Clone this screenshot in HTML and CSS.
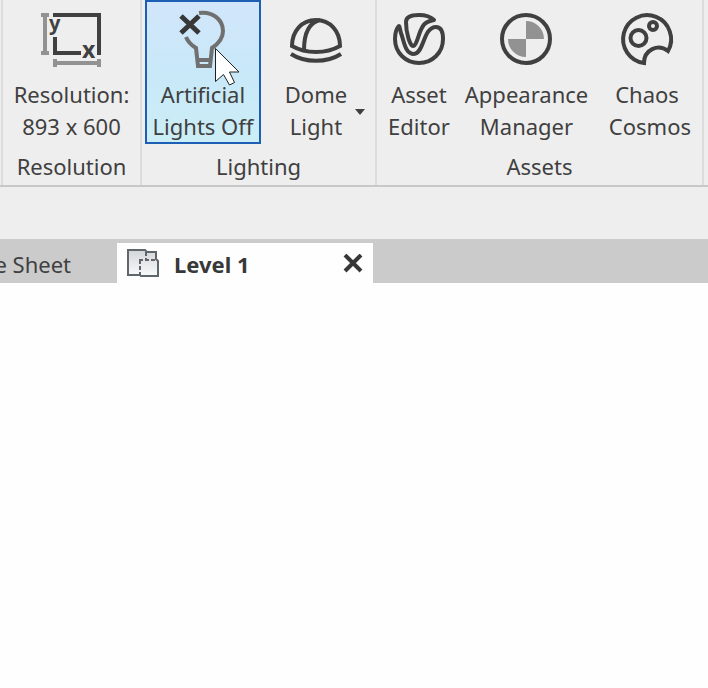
FILE: index.html
```html
<!DOCTYPE html>
<html lang="en">
<head>
    <meta charset="UTF-8">
    <meta name="viewport" content="width=device-width, initial-scale=1.0">
    <title>Level 1</title>
    <link rel="stylesheet" href="styles.css">
</head>
<body>
    <div class="ribbon">
        <!-- Resolution -->
        <section class="panel panel-resolution">
            <div class="tools">
                <button class="tool" type="button">
                    <svg class="icon icon-wide" viewBox="0 0 64 60" fill="none">
                        <path d="M6 5v42M2 7h8M2 45h8M16 55h44M16 51v8M60 51v8" stroke="#929292" stroke-width="4"/>
                        <path d="M14 7h46v40M16 29v16h26" stroke="#404040" stroke-width="4"/>
                        <text class="axis" x="10" y="22" font-size="20">y</text>
                        <text class="axis" x="43" y="50" font-size="23">x</text>
                    </svg>
                    <span class="tool-label">Resolution:<br>893 x 600</span>
                </button>
            </div>
            <div class="panel-title">Resolution</div>
        </section>

        <!-- Lighting -->
        <section class="panel panel-lighting">
            <div class="tools">
                <button class="tool selected" type="button">
                    <svg class="icon icon-wide" viewBox="0 0 64 60" fill="none">
                        <path d="M28 5c14-2 24 7 24 18 0 8-5 13-11 17l-2 18H27l-2-18c-5-3-8-6-10-11M27 52h13" stroke="#707070" stroke-width="4"/>
                        <path d="M10 8l18 17M28 8L10 25" stroke="#383838" stroke-width="5"/>
                    </svg>
                    <span class="tool-label">Artificial<br>Lights Off</span>
                    <svg class="cursor" viewBox="0 0 27 40">
                        <path d="M1.500 1.500v33l8-7 6 10.500 5-2.500-5-10.500H25z" fill="#fff" stroke="#202020" stroke-width="1"/>
                    </svg>
                </button>
                <button class="tool dome" type="button">
                    <svg class="icon icon-wide" viewBox="0 0 64 60" fill="none" stroke="#404040" stroke-width="4">
                        <path d="M8 38c0-15 10-26 24-26s24 11 24 26c-14 8-34 8-48 0zM36 12c-12 3-16 14-16 30"/>
                        <path d="M7 46c14 9 36 9 50 0"/>
                    </svg>
                    <span class="tool-label">Dome<br>Light</span>
                    <svg class="arrow" viewBox="0 0 10 6"><path d="M0 0h10L5 6z" fill="#404040"/></svg>
                </button>
            </div>
            <div class="panel-title">Lighting</div>
        </section>

        <!-- Assets -->
        <section class="panel panel-assets">
            <div class="tools">
                <button class="tool" type="button">
                    <svg class="icon" viewBox="0 0 60 60" fill="none" stroke="#404040" stroke-width="4" stroke-linejoin="round">
                        <path d="M10 18C7 21 6 26 6 31c0 14 11 24 24 24s24-10 24-24c0-8-2-12-7-12-13 0-12 27-22 27-9 0-10-13-13-21-1-3-1-6-2-7z"/>
                        <path d="M17 14c0-5 6-7 13-7 6 0 12 2 15 5-10 2-11 5-14 12-2 5-4 14-7 14s-7-13-7-24z"/>
                    </svg>
                    <span class="tool-label">Asset<br>Editor</span>
                </button>
                <button class="tool" type="button">
                    <svg class="icon" viewBox="0 0 60 60">
                        <path d="M30 31V13a18 18 0 0 1 18 18zM30 31v18a18 18 0 0 1-18-18z" fill="#929292"/>
                        <circle cx="30" cy="31" r="24" fill="none" stroke="#404040" stroke-width="4"/>
                    </svg>
                    <span class="tool-label">Appearance<br>Manager</span>
                </button>
                <button class="tool cosmos" type="button">
                    <svg class="icon" viewBox="0 0 60 60" fill="none" stroke="#404040" stroke-width="4">
                        <path d="M27 55A24 24 0 1 1 51 43c-10-8-24-1-24 12z"/>
                        <circle cx="21.500" cy="30" r="8"/>
                        <circle cx="36" cy="18" r="4"/>
                    </svg>
                    <span class="tool-label">Chaos&nbsp;<br>Cosmos</span>
                </button>
            </div>
            <div class="panel-title">Assets</div>
        </section>
    </div>

    <div class="options-bar"></div>

    <nav class="tabs">
        <button class="tab" type="button">e Sheet</button>
        <div class="tab active">
            <svg class="tab-icon" viewBox="0 0 32 30" fill="none">
                <defs>
                    <linearGradient id="page" x1="0" y1="0" x2="0" y2="1">
                        <stop offset="0" stop-color="#d3d6d9"/>
                        <stop offset="1" stop-color="#fafafa"/>
                    </linearGradient>
                </defs>
                <path d="M1 1h17l2 2h9v7l2 2v15H14l-1-1H1z" fill="url(#page)" stroke="#60676c" stroke-width="2"/>
                <path d="M19 3v8M12 11h18M13 11v15" stroke="#60676c" stroke-width="2" stroke-dasharray="4 2"/>
            </svg>
            <span class="tab-name">Level 1</span>
            <button class="close" type="button" aria-label="Close tab">
                <svg viewBox="0 0 20 20"><path d="M2 1l16 16M18 1L2 17" stroke="#383838" stroke-width="4"/></svg>
            </button>
        </div>
    </nav>

    <main class="canvas"></main>
</body>
</html>
```

FILE: styles.css
```css
* {
    box-sizing: border-box;
}

body {
    display: flex;
    flex-direction: column;
    min-height: 100vh;
    margin: 0;
    overflow-x: hidden;
    background: #fefefe;
    color: #404040;
    font-family: "Noto Sans", "Open Sans", sans-serif;
    font-size: 22px;
    line-height: 32px;
}

button {
    margin: 0;
    padding: 0;
    border: none;
    background: none;
    color: inherit;
    font: inherit;
    cursor: pointer;
}

svg {
    display: block;
}

.ribbon {
    display: flex;
    padding-left: 1px;
    border-bottom: 2px solid #c8c8c8;
    background: #eeeeee;
}

.panel {
    flex: none;
    padding-bottom: 3px;
    border-left: 2px solid #dcdcdc;
}

.panel-resolution {
    width: 139px;
}

.panel-lighting {
    width: 235px;
}

.panel-assets {
    width: 329px;
    border-right: 2px solid #dcdcdc;
}

.tools {
    display: flex;
}

.panel-resolution .tools {
    justify-content: center;
}

.panel-lighting .tools {
    gap: 16px;
    padding-left: 3px;
}

.panel-assets .tools {
    gap: 15px;
    padding: 0 11px;
}

.tool {
    display: flex;
    flex-direction: column;
    align-items: center;
    position: relative;
    height: 144px;
    padding-top: 8px;
    white-space: nowrap;
}

.tool.selected {
    width: 116px;
    padding-top: 6px;
    border: 2px solid #1c5fb4;
    background: linear-gradient(#d2e6fa, #c8e8f8 50%, #cceef6);
}

.tool.dome {
    width: 78px;
}

.tool.cosmos {
    margin-left: auto;
}

.tool.cosmos .icon {
    margin-right: 6px;
}

.icon {
    width: 60px;
    height: 60px;
    margin-bottom: 10px;
}

.icon-wide {
    width: 64px;
}

.axis {
    fill: #404040;
    font-weight: bold;
}

.cursor {
    position: absolute;
    top: 45px;
    left: 67px;
    width: 27px;
    height: 40px;
}

.arrow {
    position: absolute;
    top: 109px;
    right: -10px;
    width: 10px;
    height: 6px;
}

.panel-title {
    padding-top: 6px;
    text-align: center;
}

.options-bar {
    height: 52px;
    background: #eeeeee;
}

.tabs {
    display: flex;
    padding-top: 4px;
    background: #cbcbcb;
}

.tab {
    width: 117px;
    height: 40px;
    padding: 2px 46px 0 0;
    white-space: nowrap;
    direction: rtl;
}

.tab.active {
    display: flex;
    align-items: center;
    width: 256px;
    padding: 2px 10px 0;
    background: #fefefe;
    color: #383838;
    font-weight: bold;
    direction: ltr;
}

.tab-icon {
    width: 32px;
    height: 30px;
    margin-right: 15px;
}

.close {
    width: 20px;
    height: 20px;
    margin-left: auto;
}

.canvas {
    flex: 1;
    background: #fefefe;
}
```
